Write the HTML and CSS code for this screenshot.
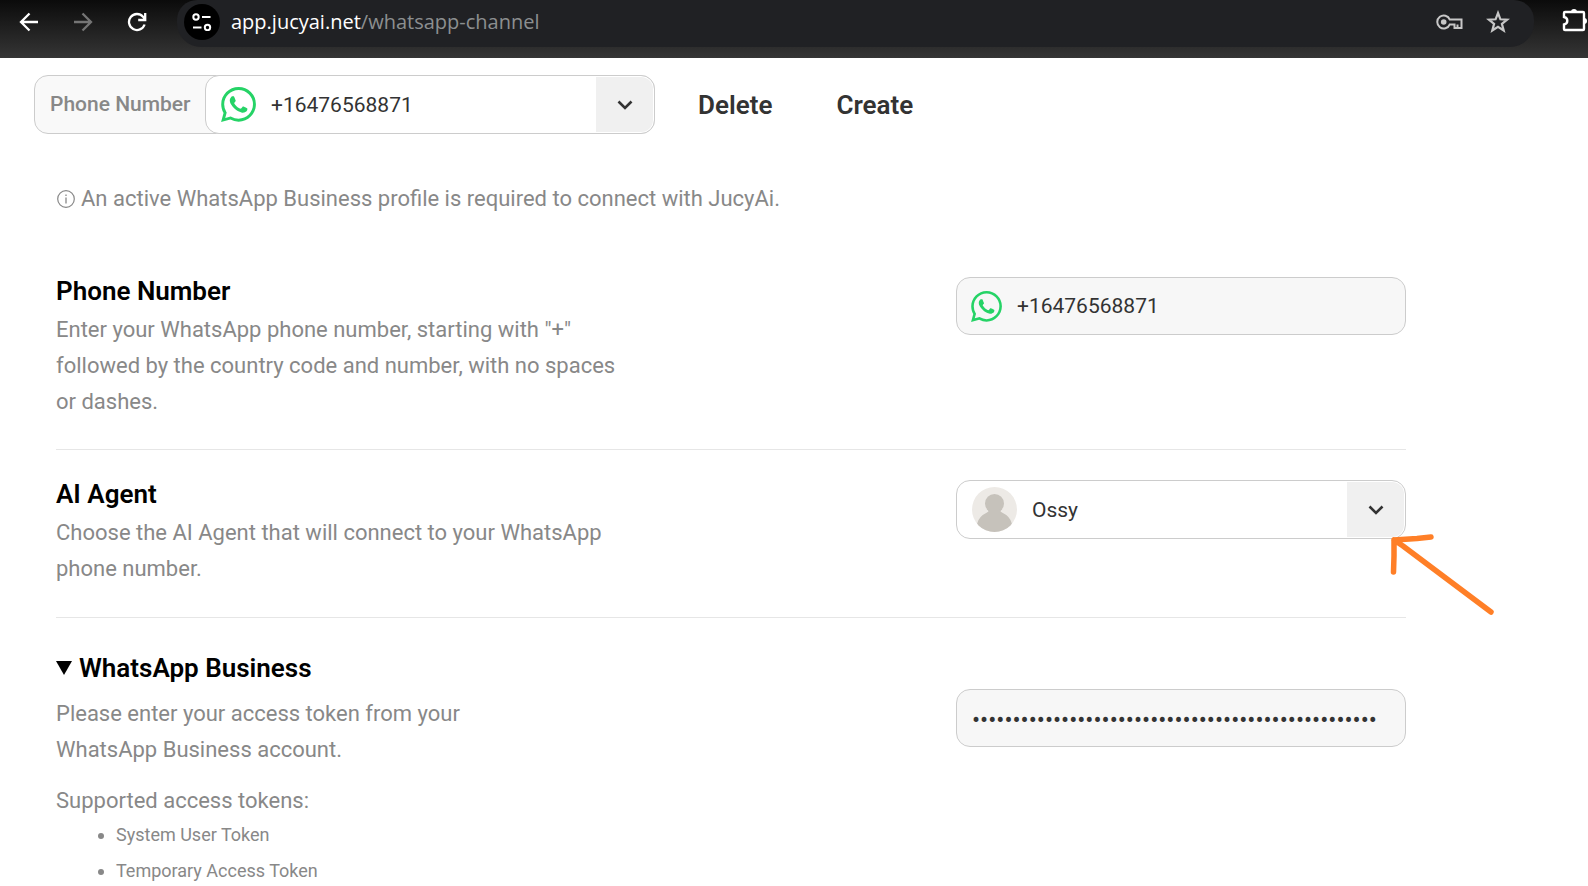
FILE: index.html
```html
<!DOCTYPE html>
<html lang="en">
<head>
<meta charset="utf-8">
<title>WhatsApp Channel</title>
<link rel="stylesheet" href="styles.css">
</head>
<body>
<svg class="sprite" aria-hidden="true">
  <symbol id="whatsapp" viewBox="0 0 24 24"><path d="M17.472 14.382c-.297-.149-1.758-.867-2.03-.967-.273-.099-.471-.148-.67.15-.197.297-.767.966-.94 1.164-.173.199-.347.223-.644.075-.297-.15-1.255-.463-2.39-1.475-.883-.788-1.48-1.761-1.653-2.059-.173-.297-.018-.458.13-.606.134-.133.298-.347.446-.52.149-.174.198-.298.298-.497.099-.198.05-.371-.025-.52-.075-.149-.669-1.612-.916-2.207-.242-.579-.487-.5-.669-.51-.173-.008-.371-.01-.57-.01-.198 0-.52.074-.792.372-.272.297-1.04 1.016-1.04 2.479 0 1.462 1.065 2.875 1.213 3.074.149.198 2.096 3.2 5.077 4.487.709.306 1.262.489 1.694.625.712.227 1.36.195 1.871.118.571-.085 1.758-.719 2.006-1.413.248-.694.248-1.289.173-1.413-.074-.124-.272-.198-.57-.347m-5.421 7.403h-.004a9.87 9.87 0 01-5.031-1.378l-.361-.214-3.741.982.998-3.648-.235-.374a9.86 9.86 0 01-1.51-5.26c.001-5.45 4.436-9.884 9.888-9.884 2.64 0 5.122 1.03 6.988 2.898a9.825 9.825 0 012.893 6.994c-.003 5.45-4.437 9.884-9.885 9.884m8.413-18.297A11.815 11.815 0 0012.05 0C5.495 0 .16 5.335.157 11.892c0 2.096.547 4.142 1.588 5.945L.057 24l6.305-1.654a11.882 11.882 0 005.683 1.448h.005c6.554 0 11.89-5.335 11.893-11.893a11.821 11.821 0 00-3.48-8.413z"/></symbol>
  <symbol id="chevron" viewBox="0 0 16 10"><path d="M1.500 1.500 8 8l6.500-6.500" fill="none" stroke="#333" stroke-width="2.600"/></symbol>
</svg>

<header class="browser">
  <nav class="nav" aria-label="Browser">
    <button type="button" aria-label="Back"><svg width="20" height="20" viewBox="0 0 20 20"><path d="M19 10H2.500M10.500 1.500 2 10l8.500 8.500" fill="none" stroke="#fff" stroke-width="2.300"/></svg></button>
    <button type="button" aria-label="Forward"><svg width="20" height="20" viewBox="0 0 20 20"><path d="M1 10h16.500M9.500 1.500 18 10l-8.500 8.500" fill="none" stroke="#757575" stroke-width="2.300"/></svg></button>
    <button type="button" aria-label="Reload"><svg width="20" height="20" viewBox="0 0 20 20"><path d="M17.600 12.500A8 8 0 1 1 16 4.700l2 2.300M18.200 1v7h-7" fill="none" stroke="#fff" stroke-width="2.300"/></svg></button>
  </nav>
  <div class="omnibox">
    <button type="button" class="site" aria-label="Site information"><svg width="20" height="18" viewBox="0 0 20 18" fill="none" stroke="#fff" stroke-width="2"><circle cx="4" cy="4" r="2.700"/><path d="M10 4h8.500M1 14.500h8.500"/><circle cx="15.500" cy="14.500" r="2.700"/></svg></button>
    <p class="url">app.jucyai.net<span>/whatsapp-channel</span></p>
    <button type="button" aria-label="Passwords"><svg width="28" height="16" viewBox="0 0 28 16"><g fill="none" stroke="#c7c7c7" stroke-width="2"><path d="M13.800 5.600A6.500 6.500 0 1 0 13.800 10.400H18.500V14H25.500V5.600Z"/><path d="M21.500 14v-3.500"/></g><circle cx="7.700" cy="8" r="2.800" fill="#c7c7c7"/></svg></button>
    <button type="button" aria-label="Bookmark"><svg width="24" height="24" viewBox="0 0 24 24"><path d="m12 3 2.400 6.300 6.700.400-5.200 4.200 1.800 6.600L12 16.800l-5.700 3.700 1.800-6.600-5.200-4.200 6.700-.400Z" fill="none" stroke="#c7c7c7" stroke-width="2.200"/></svg></button>
  </div>
  <button type="button" class="extensions" aria-label="Extensions"><svg width="26" height="26" viewBox="0 0 26 26"><path d="M3 6h18q1 0 1 1v16q0 1-1 1H3q-1 0-1-1v-4.500q3.300-.500 3.300-3.700T2 11V7q0-1 1-1Z" fill="none" stroke="#fff" stroke-width="2.400"/><path d="M9 6a3 3 0 0 1 6 0ZM22 12a3 3 0 0 1 0 6Z" fill="#fff"/></svg></button>
</header>

<main>
  <div class="toolbar">
    <div class="picker">
      <label for="number">Phone Number</label>
      <div class="field">
        <svg class="logo" width="35" height="35"><use href="#whatsapp"/></svg>
        <select id="number"><option>+16476568871</option></select>
        <span class="toggle"><svg width="16" height="10"><use href="#chevron"/></svg></span>
      </div>
    </div>
    <button type="button">Delete</button>
    <button type="button">Create</button>
  </div>

  <div class="settings">
    <p class="notice"><svg width="18" height="18" viewBox="0 0 18 18"><circle cx="9" cy="9" r="8.300" fill="none" stroke="#888" stroke-width="1.200"/><path d="M9 7.500v6M9 4.500V6" stroke="#888" stroke-width="1.300"/></svg>An active WhatsApp Business profile is required to connect with JucyAi.</p>

    <section class="row phone">
      <div class="info">
        <h2><label for="phone">Phone Number</label></h2>
        <p>Enter your WhatsApp phone number, starting with "+" followed by the country code and number, with no spaces or dashes.</p>
      </div>
      <div class="field muted">
        <svg class="logo" width="31" height="31"><use href="#whatsapp"/></svg>
        <input id="phone" type="text" value="+16476568871" readonly>
      </div>
    </section>

    <section class="row agent">
      <div class="info">
        <h2><label for="agent">AI Agent</label></h2>
        <p>Choose the AI Agent that will connect to your WhatsApp phone number.</p>
      </div>
      <div class="field">
        <svg width="45" height="45" viewBox="0 0 45 45"><clipPath id="round"><circle cx="22.500" cy="22.500" r="22.500"/></clipPath><g clip-path="url(#round)"><path d="M0 0h45v45H0z" fill="#edeae6"/><g fill="#c6c2bb"><ellipse cx="22.500" cy="16.500" rx="9.500" ry="9.500"/><path d="M17 21h11q-.500 3 2 4.500 8.500 4 10 11.500V45H5v-8q1.500-7.500 10-11.500 2.500-1.500 2-4.500Z"/></g></g></svg>
        <select id="agent"><option>Ossy</option></select>
        <span class="toggle"><svg width="16" height="10"><use href="#chevron"/></svg></span>
        <svg class="pointer" width="108" height="84" viewBox="0 0 108 84"><path d="M43 6 29 7.500 6 9 6 25 5.500 41M6 9 15 15 103 81" fill="none" stroke="#ff7f27" stroke-width="5.500" stroke-linecap="round" stroke-linejoin="round"/></svg>
      </div>
    </section>

    <details open>
      <summary><svg width="16" height="14" viewBox="0 0 16 14"><path d="M0 0h16L8 14Z"/></svg>WhatsApp Business</summary>
      <div class="row">
        <div class="info token">
          <p><label for="token">Please enter your access token from your WhatsApp Business account.</label></p>
          <p>Supported access tokens:</p>
          <ul>
            <li>System User Token</li>
            <li>Temporary Access Token</li>
          </ul>
        </div>
        <div class="field muted">
          <input id="token" type="password" value="12345678901234567890123456789012345678901234567890" readonly>
        </div>
      </div>
    </details>
  </div>
</main>
</body>
</html>
```
FILE: styles.css
```css
* { box-sizing: border-box; }

body {
  margin: 0;
  overflow: hidden;
  background: #fff;
  color: #888;
  font: 22px/36px Roboto, "Liberation Sans", sans-serif;
}

h2, p, ul { margin: 0; font-size: inherit; }

button {
  padding: 0;
  border: 0;
  background: none;
  color: #333;
  font: 600 26px/36px Roboto, sans-serif;
}

svg { flex: none; }
.sprite { display: none; }

/* Browser bar */
.browser {
  display: flex;
  height: 58px;
  overflow: hidden;
  background: linear-gradient(#0b0b0b, #353535);
}
.browser button { display: flex; flex: none; }
.nav {
  display: flex;
  align-items: center;
  gap: 34px;
  height: 44px;
  padding: 0 30px 0 19px;
}
.omnibox {
  display: flex;
  flex: 1;
  align-items: center;
  gap: 22px;
  height: 47px;
  padding: 0 24px 4px 7px;
  border-radius: 20px 20px 24px 24px;
  background: #202124;
}
.browser .site {
  align-items: center;
  justify-content: center;
  width: 36px;
  height: 36px;
  border-radius: 50%;
  background: #000;
}
.url {
  flex: 1;
  margin-left: -11px;
  color: #fff;
  font: 20px/28px "Open Sans", sans-serif;
}
.url span { color: #8c8f90; }
.browser .extensions {
  align-items: center;
  height: 38px;
  margin-left: 28px;
}

/* Channel toolbar */
.toolbar {
  display: flex;
  align-items: center;
  gap: 64px;
  padding: 17px 34px 0;
}
.picker {
  display: flex;
  width: 621px;
  margin-right: -21px;
  border: 1px solid #ccc;
  border-radius: 14px;
  background: #f9f9f9;
}
.picker label {
  width: 171px;
  padding: 10px 0 0 15px;
  font-size: 21px;
  font-weight: 500;
}
.picker .field {
  flex: 1;
  margin: -1px;
}

/* Fields */
.field {
  position: relative;
  display: flex;
  align-items: center;
  height: 59px;
  padding: 1px 1px 1px 15px;
  border: 1px solid #ccc;
  border-radius: 14px;
  background: #fff;
}
.muted {
  height: 58px;
  padding-left: 14px;
  background: #f7f7f7;
}
.logo { fill: #25d366; }
.field input,
.field select {
  flex: 1;
  min-width: 0;
  height: 36px;
  padding: 0 0 0 15px;
  border: 0;
  outline: 0;
  appearance: none;
  background: none;
  color: #333;
  font: 21px/36px Roboto, sans-serif;
}
.field input[type="password"] {
  padding: 3px 0 0 1px;
  font-size: 24px;
}
.toggle {
  display: flex;
  align-items: center;
  justify-content: center;
  width: 57px;
  height: 55px;
  border-radius: 0 12px 12px 0;
  background: #f0f0f0;
}
.pointer {
  position: absolute;
  top: 50px;
  left: 431px;
}

/* Settings */
.settings { padding: 47px 182px 0 56px; }
.notice {
  display: flex;
  align-items: center;
  gap: 6px;
  padding-left: 1px;
}
.row {
  display: grid;
  grid-template-columns: 2fr 1fr;
  align-items: start;
}
.phone, .agent { border-bottom: 1px solid #e6e6e6; }
.phone { padding: 60px 0 29px; }
.agent { padding: 30px 0; }
.info p { max-width: 580px; }
h2, summary {
  color: #000;
  font-size: 26px;
  font-weight: 600;
  line-height: 28px;
}
h2 + p { margin-top: 7px; }
summary {
  display: flex;
  align-items: center;
  gap: 7px;
  padding: 36px 0 7px;
  list-style: none;
}
.token { padding-top: 7px; }
.token p { max-width: 450px; margin-bottom: 15px; }
.token p + p { margin-bottom: -2px; }
ul {
  padding-left: 60px;
  font-size: 18px;
}
```
